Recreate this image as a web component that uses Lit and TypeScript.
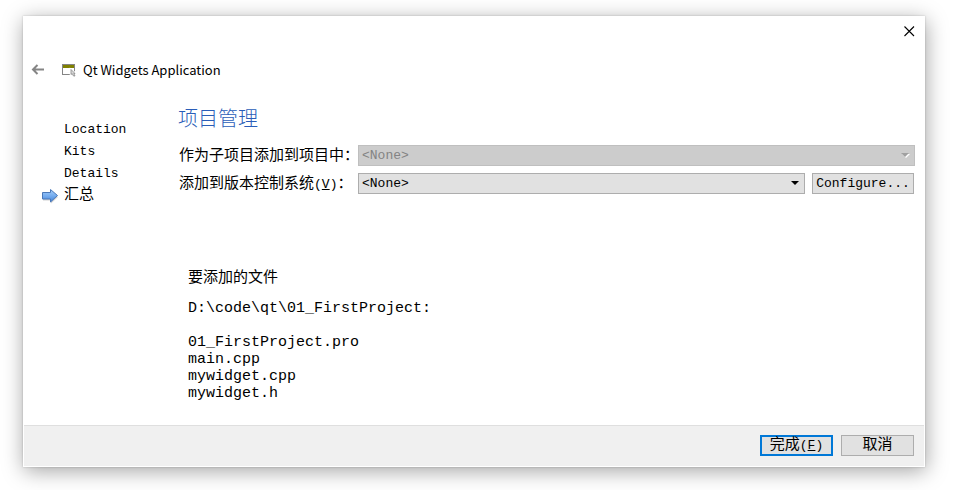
import { LitElement, html, css, svg, nothing } from "lit";
import { customElement, state } from "lit/decorators.js";
import { classMap } from "lit/directives/class-map.js";

const STEPS = ["Location", "Kits", "Details", "汇总"];
const FILES = ["01_FirstProject.pro", "main.cpp", "mywidget.cpp", "mywidget.h"];

const backIcon = svg`<svg width="14" height="12" viewBox="0 0 14 12" fill="none" stroke="#858585" stroke-width="2" aria-hidden="true">
  <path d="M2 5.500H13M6.500 1L2 5.500l4.500 4.500"/></svg>`;

const closeIcon = svg`<svg width="11" height="11" viewBox="0 0 11 11" fill="none" stroke="#000" stroke-width="1.1" aria-hidden="true">
  <path d="M.5.5l9.500 9.500M10 .5L.5 10"/></svg>`;

const windowIcon = svg`<svg width="15" height="13" viewBox="0 0 15 13" aria-hidden="true">
  <path d="M0 0h13v11H0z" fill="#858585"/>
  <path d="M1 1h11v3H1z" fill="#808000"/>
  <path d="M1 4h11v6H1z" fill="#fff"/>
  <path d="M8.500 5v6l1.500-1 1.500 2.500 1.500-.5-1-2.500h2z" fill="#fff" stroke="#fff" stroke-width="1.500"/>
  <path d="M9 5.500v5l1.200-1 1.300 2.500h1.500l-1.200-2.500H13z" fill="#ddd" stroke="#888" stroke-width=".8"/></svg>`;

const stepIcon = svg`<svg width="17" height="15" viewBox="0 0 17 15" aria-hidden="true">
  <defs><linearGradient id="g" x1="0" y1="0" x2="0" y2="1">
    <stop offset="0" stop-color="#a4ccf8"/><stop offset=".5" stop-color="#76aef0"/><stop offset="1" stop-color="#4684d8"/>
  </linearGradient></defs>
  <path d="M2 5h8V2l7 6-7 6.500V11.500H2z" fill="#000" opacity=".18"/>
  <path d="M1.500 3.500h8v-3l7 6-7 6.500v-3h-8z" fill="url(#g)" stroke="#4a78b8"/></svg>`;

@customElement("app-root")
export class AppRoot extends LitElement {
  @state() private current = 3;

  static styles = css`
    :host {
      display: flex;
      box-sizing: border-box;
      min-height: 100vh;
      padding: 16px 30px 23px 23px;
      background: #fff;
      color: #000;
      font: 13px/22px "Liberation Mono", "Noto Sans CJK SC", monospace;
    }
    * { box-sizing: border-box; }
    .dialog {
      flex: 1;
      display: flex;
      flex-direction: column;
      background: #fff;
      padding: 0 1px 1px;
      box-shadow: 0 0 2px rgba(0, 0, 0, 0.2), 1px 4px 20px rgba(0, 0, 0, 0.36);
    }
    .titlebar { display: flex; justify-content: flex-end; padding: 5px 5px 0; }
    .icon-button {
      display: flex;
      align-items: center;
      justify-content: center;
      width: 20px;
      height: 20px;
      padding: 0;
      border: 0;
      background: none;
    }
    .header { display: flex; align-items: center; padding: 18px 4px 0; }
    .header svg { flex: none; }
    .app-icon { display: flex; margin-left: 14px; }
    .title {
      margin: 0 0 0 6px;
      font: 13px/22px "Noto Sans CJK SC", sans-serif;
    }
    .body { flex: 1; display: flex; padding: 25px 9px 23px 17px; }
    .steps { list-style: none; width: 137px; margin: 0; padding: 13px 0 0; }
    .step { display: flex; align-items: center; height: 22px; padding-left: 23px; }
    .step.current { padding-left: 0; gap: 6px; }
    .cjk { font-size: 15px; }
    .page { flex: 1; }
    .heading {
      margin: 0;
      color: #2a5db8;
      font: 300 20px/24px "Noto Sans CJK SC", sans-serif;
    }
    .form {
      display: grid;
      grid-template-columns: 179px 1fr;
      gap: 7px 0;
      padding: 15px 0 0 1px;
    }
    .form label { font-size: 15px; line-height: 23px; height: 21px; white-space: nowrap; }
    .mnemonic { font-size: 13px; }
    .field { display: flex; gap: 7px; }
    .field:last-child { padding-right: 1px; }
    .combo { position: relative; flex: 1; display: flex; }
    select {
      appearance: none;
      width: 100%;
      height: 21px;
      padding: 1px 20px 0 3px;
      border: 1px solid #adadad;
      border-radius: 0;
      background: #e1e1e1;
      color: #000;
      font: 13px/18px "Liberation Mono", monospace;
    }
    select:disabled { border-color: #bfbfbf; background: #ccc; color: #838383; opacity: 1; }
    .arrow { position: absolute; right: 5px; top: 8px; pointer-events: none; }
    .push {
      width: 73px;
      height: 21px;
      padding: 1px 0 0;
      border: 1px solid #adadad;
      background: #e1e1e1;
      color: #000;
      font: 15px/18px "Liberation Mono", "Noto Sans CJK SC", monospace;
    }
    .push.default { border: 2px solid #0078d7; line-height: 16px; }
    .push.wide { width: 102px; font-size: 13px; }
    .summary { padding: 70px 0 0 10px; }
    .summary-title { margin: 0 0 12px; font: 15px/24px "Noto Sans CJK SC", sans-serif; }
    .path, .files {
      margin: 0;
      padding: 0;
      list-style: none;
      font: 15px/17px "Liberation Mono", monospace;
    }
    .files { padding-top: 17px; }
    .footer {
      display: flex;
      justify-content: flex-end;
      gap: 8px;
      padding: 9px 10px 10px;
      border-top: 1px solid #dfdfdf;
      background: #f0f0f0;
    }
  `;

  private combo(id: string, disabled: boolean) {
    return html`<div class="combo">
      <select id=${id} ?disabled=${disabled}><option>&lt;None&gt;</option></select>
      <svg class="arrow" width="9" height="6" viewBox="0 0 9 6" aria-hidden="true">
        ${disabled ? svg`<path d="M1 1h8L5 5z" fill="#fff"/>` : nothing}
        <path d="M0 0h8L4 4z" fill=${disabled ? "#a0a0a0" : "#000"}/>
      </svg>
    </div>`;
  }

  render() {
    return html`
      <main class="dialog">
        <div class="titlebar">
          <button class="icon-button" aria-label="关闭">${closeIcon}</button>
        </div>
        <header class="header">
          <button class="icon-button" aria-label="返回">${backIcon}</button>
          <span class="app-icon">${windowIcon}</span>
          <h1 class="title">Qt Widgets Application</h1>
        </header>
        <div class="body">
          <ol class="steps">
            ${STEPS.map((name, i) => {
              const current = i === this.current;
              return html`<li class=${classMap({ step: true, current, cjk: current })}>
                ${current ? stepIcon : nothing}<span>${name}</span>
              </li>`;
            })}
          </ol>
          <section class="page">
            <h2 class="heading">项目管理</h2>
            <div class="form">
              <label for="project">作为子项目添加到项目中：</label>
              <div class="field">${this.combo("project", true)}</div>
              <label for="vcs">添加到版本控制系统<span class="mnemonic">(<u>V</u>)</span>：</label>
              <div class="field">
                ${this.combo("vcs", false)}
                <button class="push wide">Configure...</button>
              </div>
            </div>
            <div class="summary">
              <h3 class="summary-title">要添加的文件</h3>
              <p class="path">D:\\code\\qt\\01_FirstProject:</p>
              <ul class="files">${FILES.map((f) => html`<li>${f}</li>`)}</ul>
            </div>
          </section>
        </div>
        <footer class="footer">
          <button class="push default">完成<span class="mnemonic">(<u>F</u>)</span></button>
          <button class="push">取消</button>
        </footer>
      </main>
    `;
  }
}
